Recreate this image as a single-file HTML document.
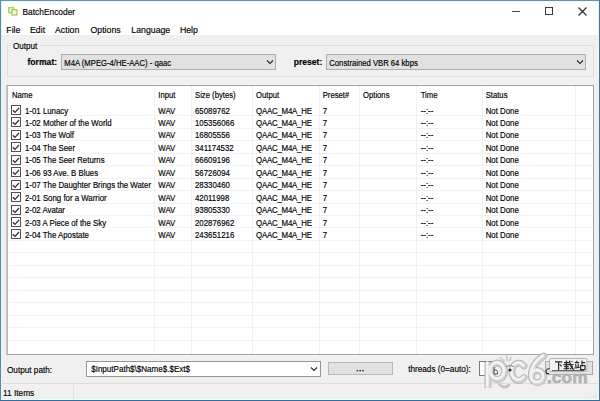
<!DOCTYPE html>
<html><head><meta charset="utf-8"><style>
html,body{margin:0;padding:0;width:600px;height:401px;overflow:hidden;background:#f0f0f0;}
.b{position:absolute;}
.t{position:absolute;white-space:pre;font-family:"Liberation Sans",sans-serif;-webkit-text-stroke:0.15px currentColor;}
</style></head><body>
<div class="b" style="left:0px;top:0px;width:600px;height:401px;background:#f0f0f0;"></div>
<div class="b" style="left:0px;top:0px;width:600px;height:35px;background:#ffffff;"></div>
<svg class="b" style="left:4px;top:3px" width="18" height="16" viewBox="0 0 18 16"><rect x="4.7" y="4.7" width="4.8" height="4.9" fill="#f4fbe6" stroke="#a8d25e" stroke-width="1.4"/><rect x="7.9" y="6.7" width="5" height="5.3" fill="#f4fbe6" stroke="#a8d25e" stroke-width="1.4"/></svg>
<div class="t" style="left:22.5px;top:6.75px;font-size:8.4px;line-height:10.08px;color:#000;transform:scaleY(1.12);transform-origin:0 7.95px;">BatchEncoder</div>
<div class="b" style="left:512px;top:11px;width:8px;height:1px;background:#444;"></div>
<div class="b" style="left:545px;top:7px;width:8px;height:8px;border:1.2px solid #3a3a3a;box-sizing:border-box;"></div>
<svg class="b" style="left:578px;top:7px" width="9" height="9" viewBox="0 0 9 9"><path d="M0.5 0.5L8.5 8.5M8.5 0.5L0.5 8.5" stroke="#333" stroke-width="1.3"/></svg>
<div class="t" style="left:6.3px;top:24.72px;font-size:8.75px;line-height:10.5px;color:#000;transform:scaleY(1.12);transform-origin:0 8.28px;">File</div>
<div class="t" style="left:30px;top:24.72px;font-size:8.75px;line-height:10.5px;color:#000;transform:scaleY(1.12);transform-origin:0 8.28px;">Edit</div>
<div class="t" style="left:55px;top:24.72px;font-size:8.75px;line-height:10.5px;color:#000;transform:scaleY(1.12);transform-origin:0 8.28px;">Action</div>
<div class="t" style="left:90.5px;top:24.72px;font-size:8.75px;line-height:10.5px;color:#000;transform:scaleY(1.12);transform-origin:0 8.28px;">Options</div>
<div class="t" style="left:131.3px;top:24.72px;font-size:8.75px;line-height:10.5px;color:#000;transform:scaleY(1.12);transform-origin:0 8.28px;">Language</div>
<div class="t" style="left:179.9px;top:24.72px;font-size:8.75px;line-height:10.5px;color:#000;transform:scaleY(1.12);transform-origin:0 8.28px;">Help</div>
<div class="b" style="left:7px;top:45px;width:587px;height:32px;border:1px solid #e0e0e0;box-sizing:border-box;"></div>
<div class="b" style="left:11px;top:42px;width:29px;height:9px;background:#f0f0f0;"></div>
<div class="t" style="left:13px;top:41.53px;font-size:8.1px;line-height:9.72px;color:#000;transform:scaleY(1.12);transform-origin:0 7.67px;">Output</div>
<div class="t" style="left:27.5px;top:57.16px;font-size:8.6px;line-height:10.32px;font-weight:bold;color:#000;transform:scaleY(1.12);transform-origin:0 8.14px;">format:</div>
<div class="b" style="left:61px;top:54px;width:215px;height:16px;background:#e1e1e1;border:1px solid #adadad;box-sizing:border-box;"></div>
<div class="t" style="left:64.3px;top:58.71px;font-size:7.7px;line-height:9.24px;color:#000;transform:scaleY(1.12);transform-origin:0 7.29px;">M4A (MPEG-4/HE-AAC) - qaac</div>
<svg class="b" style="left:266px;top:59px" width="8" height="6" viewBox="0 0 8 6"><path d="M1 1.5L4 4.5L7 1.5" fill="none" stroke="#2a2a2a" stroke-width="1.1"/></svg>
<div class="t" style="left:293.7px;top:57.16px;font-size:8.6px;line-height:10.32px;font-weight:bold;color:#000;transform:scaleY(1.12);transform-origin:0 8.14px;">preset:</div>
<div class="b" style="left:326px;top:54px;width:260px;height:16px;background:#e1e1e1;border:1px solid #adadad;box-sizing:border-box;"></div>
<div class="t" style="left:329.3px;top:58.71px;font-size:7.7px;line-height:9.24px;color:#000;transform:scaleY(1.12);transform-origin:0 7.29px;">Constrained VBR 64 kbps</div>
<svg class="b" style="left:576px;top:59px" width="8" height="6" viewBox="0 0 8 6"><path d="M1 1.5L4 4.5L7 1.5" fill="none" stroke="#2a2a2a" stroke-width="1.1"/></svg>
<div class="b" style="left:6px;top:85px;width:588px;height:270px;background:#fff;border:1px solid #a6a6aa;border-left:0;box-sizing:border-box;"></div>
<div class="b" style="left:6px;top:85px;width:1px;height:270px;background:#c4c4c8;"></div>
<div class="b" style="left:7px;top:86px;width:1px;height:268px;background:#bcbcc0;"></div>
<div class="b" style="left:154px;top:86px;width:1px;height:268px;background:#f0f0f0;"></div>
<div class="b" style="left:191px;top:86px;width:1px;height:268px;background:#f0f0f0;"></div>
<div class="b" style="left:252px;top:86px;width:1px;height:268px;background:#f0f0f0;"></div>
<div class="b" style="left:319px;top:86px;width:1px;height:268px;background:#f0f0f0;"></div>
<div class="b" style="left:359px;top:86px;width:1px;height:268px;background:#f0f0f0;"></div>
<div class="b" style="left:416px;top:86px;width:1px;height:268px;background:#f0f0f0;"></div>
<div class="b" style="left:482px;top:86px;width:1px;height:268px;background:#f0f0f0;"></div>
<div class="b" style="left:575px;top:86px;width:1px;height:268px;background:#f0f0f0;"></div>
<div class="b" style="left:8px;top:115.4px;width:585px;height:1px;background:#f2f2f2;"></div>
<div class="b" style="left:8px;top:127.85000000000001px;width:585px;height:1px;background:#f2f2f2;"></div>
<div class="b" style="left:8px;top:140.3px;width:585px;height:1px;background:#f2f2f2;"></div>
<div class="b" style="left:8px;top:152.75px;width:585px;height:1px;background:#f2f2f2;"></div>
<div class="b" style="left:8px;top:165.2px;width:585px;height:1px;background:#f2f2f2;"></div>
<div class="b" style="left:8px;top:177.65px;width:585px;height:1px;background:#f2f2f2;"></div>
<div class="b" style="left:8px;top:190.1px;width:585px;height:1px;background:#f2f2f2;"></div>
<div class="b" style="left:8px;top:202.55px;width:585px;height:1px;background:#f2f2f2;"></div>
<div class="b" style="left:8px;top:215.0px;width:585px;height:1px;background:#f2f2f2;"></div>
<div class="b" style="left:8px;top:227.45px;width:585px;height:1px;background:#f2f2f2;"></div>
<div class="b" style="left:8px;top:239.9px;width:585px;height:1px;background:#f2f2f2;"></div>
<div class="b" style="left:8px;top:252.35px;width:585px;height:1px;background:#f2f2f2;"></div>
<div class="b" style="left:8px;top:264.79999999999995px;width:585px;height:1px;background:#f2f2f2;"></div>
<div class="b" style="left:8px;top:277.25px;width:585px;height:1px;background:#f2f2f2;"></div>
<div class="b" style="left:8px;top:289.7px;width:585px;height:1px;background:#f2f2f2;"></div>
<div class="b" style="left:8px;top:302.15px;width:585px;height:1px;background:#f2f2f2;"></div>
<div class="b" style="left:8px;top:314.6px;width:585px;height:1px;background:#f2f2f2;"></div>
<div class="b" style="left:8px;top:327.04999999999995px;width:585px;height:1px;background:#f2f2f2;"></div>
<div class="b" style="left:8px;top:339.5px;width:585px;height:1px;background:#f2f2f2;"></div>
<div class="t" style="left:12px;top:90.71px;font-size:7.7px;line-height:9.24px;color:#000;transform:scaleY(1.12);transform-origin:0 7.29px;">Name</div>
<div class="t" style="left:158.3px;top:90.71px;font-size:7.7px;line-height:9.24px;color:#000;transform:scaleY(1.12);transform-origin:0 7.29px;">Input</div>
<div class="t" style="left:195px;top:90.71px;font-size:7.7px;line-height:9.24px;color:#000;transform:scaleY(1.12);transform-origin:0 7.29px;">Size (bytes)</div>
<div class="t" style="left:256px;top:90.71px;font-size:7.7px;line-height:9.24px;color:#000;transform:scaleY(1.12);transform-origin:0 7.29px;">Output</div>
<div class="t" style="left:322.7px;top:90.71px;font-size:7.7px;line-height:9.24px;color:#000;transform:scaleY(1.12);transform-origin:0 7.29px;">Preset#</div>
<div class="t" style="left:363px;top:90.71px;font-size:7.7px;line-height:9.24px;color:#000;transform:scaleY(1.12);transform-origin:0 7.29px;">Options</div>
<div class="t" style="left:420.7px;top:90.71px;font-size:7.7px;line-height:9.24px;color:#000;transform:scaleY(1.12);transform-origin:0 7.29px;">Time</div>
<div class="t" style="left:485.7px;top:90.71px;font-size:7.7px;line-height:9.24px;color:#000;transform:scaleY(1.12);transform-origin:0 7.29px;">Status</div>
<svg class="b" style="left:11px;top:104.90px" width="10" height="10" viewBox="0 0 10 10"><rect x="0.5" y="0.5" width="9" height="9" fill="#fff" stroke="#505050" stroke-width="1"/><path d="M1.8 5.2L4 7.3L8 3" fill="none" stroke="#2e2e2e" stroke-width="1.2"/></svg>
<div class="t" style="left:25px;top:106.57px;font-size:7.85px;line-height:9.42px;color:#000;transform:scaleY(1.12);transform-origin:0 7.43px;">1-01 Lunacy</div>
<div class="t" style="left:158.3px;top:106.57px;font-size:7.85px;line-height:9.42px;color:#000;transform:scaleY(1.12);transform-origin:0 7.43px;">WAV</div>
<div class="t" style="left:195px;top:106.57px;font-size:7.85px;line-height:9.42px;color:#000;transform:scaleY(1.12);transform-origin:0 7.43px;">65089762</div>
<div class="t" style="left:256px;top:106.57px;font-size:7.85px;line-height:9.42px;color:#000;transform:scaleY(1.12);transform-origin:0 7.43px;letter-spacing:-0.2px;">QAAC_M4A_HE</div>
<div class="t" style="left:322.7px;top:106.57px;font-size:7.85px;line-height:9.42px;color:#000;transform:scaleY(1.12);transform-origin:0 7.43px;">7</div>
<div class="t" style="left:420.7px;top:106.57px;font-size:7.85px;line-height:9.42px;color:#000;transform:scaleY(1.12);transform-origin:0 7.43px;">--:--</div>
<div class="t" style="left:485.7px;top:106.57px;font-size:7.85px;line-height:9.42px;color:#000;transform:scaleY(1.12);transform-origin:0 7.43px;">Not Done</div>
<svg class="b" style="left:11px;top:117.35px" width="10" height="10" viewBox="0 0 10 10"><rect x="0.5" y="0.5" width="9" height="9" fill="#fff" stroke="#505050" stroke-width="1"/><path d="M1.8 5.2L4 7.3L8 3" fill="none" stroke="#2e2e2e" stroke-width="1.2"/></svg>
<div class="t" style="left:25px;top:119.02px;font-size:7.85px;line-height:9.42px;color:#000;transform:scaleY(1.12);transform-origin:0 7.43px;">1-02 Mother of the World</div>
<div class="t" style="left:158.3px;top:119.02px;font-size:7.85px;line-height:9.42px;color:#000;transform:scaleY(1.12);transform-origin:0 7.43px;">WAV</div>
<div class="t" style="left:195px;top:119.02px;font-size:7.85px;line-height:9.42px;color:#000;transform:scaleY(1.12);transform-origin:0 7.43px;">105356066</div>
<div class="t" style="left:256px;top:119.02px;font-size:7.85px;line-height:9.42px;color:#000;transform:scaleY(1.12);transform-origin:0 7.43px;letter-spacing:-0.2px;">QAAC_M4A_HE</div>
<div class="t" style="left:322.7px;top:119.02px;font-size:7.85px;line-height:9.42px;color:#000;transform:scaleY(1.12);transform-origin:0 7.43px;">7</div>
<div class="t" style="left:420.7px;top:119.02px;font-size:7.85px;line-height:9.42px;color:#000;transform:scaleY(1.12);transform-origin:0 7.43px;">--:--</div>
<div class="t" style="left:485.7px;top:119.02px;font-size:7.85px;line-height:9.42px;color:#000;transform:scaleY(1.12);transform-origin:0 7.43px;">Not Done</div>
<svg class="b" style="left:11px;top:129.80px" width="10" height="10" viewBox="0 0 10 10"><rect x="0.5" y="0.5" width="9" height="9" fill="#fff" stroke="#505050" stroke-width="1"/><path d="M1.8 5.2L4 7.3L8 3" fill="none" stroke="#2e2e2e" stroke-width="1.2"/></svg>
<div class="t" style="left:25px;top:131.47px;font-size:7.85px;line-height:9.42px;color:#000;transform:scaleY(1.12);transform-origin:0 7.43px;">1-03 The Wolf</div>
<div class="t" style="left:158.3px;top:131.47px;font-size:7.85px;line-height:9.42px;color:#000;transform:scaleY(1.12);transform-origin:0 7.43px;">WAV</div>
<div class="t" style="left:195px;top:131.47px;font-size:7.85px;line-height:9.42px;color:#000;transform:scaleY(1.12);transform-origin:0 7.43px;">16805556</div>
<div class="t" style="left:256px;top:131.47px;font-size:7.85px;line-height:9.42px;color:#000;transform:scaleY(1.12);transform-origin:0 7.43px;letter-spacing:-0.2px;">QAAC_M4A_HE</div>
<div class="t" style="left:322.7px;top:131.47px;font-size:7.85px;line-height:9.42px;color:#000;transform:scaleY(1.12);transform-origin:0 7.43px;">7</div>
<div class="t" style="left:420.7px;top:131.47px;font-size:7.85px;line-height:9.42px;color:#000;transform:scaleY(1.12);transform-origin:0 7.43px;">--:--</div>
<div class="t" style="left:485.7px;top:131.47px;font-size:7.85px;line-height:9.42px;color:#000;transform:scaleY(1.12);transform-origin:0 7.43px;">Not Done</div>
<svg class="b" style="left:11px;top:142.25px" width="10" height="10" viewBox="0 0 10 10"><rect x="0.5" y="0.5" width="9" height="9" fill="#fff" stroke="#505050" stroke-width="1"/><path d="M1.8 5.2L4 7.3L8 3" fill="none" stroke="#2e2e2e" stroke-width="1.2"/></svg>
<div class="t" style="left:25px;top:143.92px;font-size:7.85px;line-height:9.42px;color:#000;transform:scaleY(1.12);transform-origin:0 7.43px;">1-04 The Seer</div>
<div class="t" style="left:158.3px;top:143.92px;font-size:7.85px;line-height:9.42px;color:#000;transform:scaleY(1.12);transform-origin:0 7.43px;">WAV</div>
<div class="t" style="left:195px;top:143.92px;font-size:7.85px;line-height:9.42px;color:#000;transform:scaleY(1.12);transform-origin:0 7.43px;">341174532</div>
<div class="t" style="left:256px;top:143.92px;font-size:7.85px;line-height:9.42px;color:#000;transform:scaleY(1.12);transform-origin:0 7.43px;letter-spacing:-0.2px;">QAAC_M4A_HE</div>
<div class="t" style="left:322.7px;top:143.92px;font-size:7.85px;line-height:9.42px;color:#000;transform:scaleY(1.12);transform-origin:0 7.43px;">7</div>
<div class="t" style="left:420.7px;top:143.92px;font-size:7.85px;line-height:9.42px;color:#000;transform:scaleY(1.12);transform-origin:0 7.43px;">--:--</div>
<div class="t" style="left:485.7px;top:143.92px;font-size:7.85px;line-height:9.42px;color:#000;transform:scaleY(1.12);transform-origin:0 7.43px;">Not Done</div>
<svg class="b" style="left:11px;top:154.70px" width="10" height="10" viewBox="0 0 10 10"><rect x="0.5" y="0.5" width="9" height="9" fill="#fff" stroke="#505050" stroke-width="1"/><path d="M1.8 5.2L4 7.3L8 3" fill="none" stroke="#2e2e2e" stroke-width="1.2"/></svg>
<div class="t" style="left:25px;top:156.37px;font-size:7.85px;line-height:9.42px;color:#000;transform:scaleY(1.12);transform-origin:0 7.43px;">1-05 The Seer Returns</div>
<div class="t" style="left:158.3px;top:156.37px;font-size:7.85px;line-height:9.42px;color:#000;transform:scaleY(1.12);transform-origin:0 7.43px;">WAV</div>
<div class="t" style="left:195px;top:156.37px;font-size:7.85px;line-height:9.42px;color:#000;transform:scaleY(1.12);transform-origin:0 7.43px;">66609196</div>
<div class="t" style="left:256px;top:156.37px;font-size:7.85px;line-height:9.42px;color:#000;transform:scaleY(1.12);transform-origin:0 7.43px;letter-spacing:-0.2px;">QAAC_M4A_HE</div>
<div class="t" style="left:322.7px;top:156.37px;font-size:7.85px;line-height:9.42px;color:#000;transform:scaleY(1.12);transform-origin:0 7.43px;">7</div>
<div class="t" style="left:420.7px;top:156.37px;font-size:7.85px;line-height:9.42px;color:#000;transform:scaleY(1.12);transform-origin:0 7.43px;">--:--</div>
<div class="t" style="left:485.7px;top:156.37px;font-size:7.85px;line-height:9.42px;color:#000;transform:scaleY(1.12);transform-origin:0 7.43px;">Not Done</div>
<svg class="b" style="left:11px;top:167.15px" width="10" height="10" viewBox="0 0 10 10"><rect x="0.5" y="0.5" width="9" height="9" fill="#fff" stroke="#505050" stroke-width="1"/><path d="M1.8 5.2L4 7.3L8 3" fill="none" stroke="#2e2e2e" stroke-width="1.2"/></svg>
<div class="t" style="left:25px;top:168.82px;font-size:7.85px;line-height:9.42px;color:#000;transform:scaleY(1.12);transform-origin:0 7.43px;">1-06 93 Ave. B Blues</div>
<div class="t" style="left:158.3px;top:168.82px;font-size:7.85px;line-height:9.42px;color:#000;transform:scaleY(1.12);transform-origin:0 7.43px;">WAV</div>
<div class="t" style="left:195px;top:168.82px;font-size:7.85px;line-height:9.42px;color:#000;transform:scaleY(1.12);transform-origin:0 7.43px;">56726094</div>
<div class="t" style="left:256px;top:168.82px;font-size:7.85px;line-height:9.42px;color:#000;transform:scaleY(1.12);transform-origin:0 7.43px;letter-spacing:-0.2px;">QAAC_M4A_HE</div>
<div class="t" style="left:322.7px;top:168.82px;font-size:7.85px;line-height:9.42px;color:#000;transform:scaleY(1.12);transform-origin:0 7.43px;">7</div>
<div class="t" style="left:420.7px;top:168.82px;font-size:7.85px;line-height:9.42px;color:#000;transform:scaleY(1.12);transform-origin:0 7.43px;">--:--</div>
<div class="t" style="left:485.7px;top:168.82px;font-size:7.85px;line-height:9.42px;color:#000;transform:scaleY(1.12);transform-origin:0 7.43px;">Not Done</div>
<svg class="b" style="left:11px;top:179.60px" width="10" height="10" viewBox="0 0 10 10"><rect x="0.5" y="0.5" width="9" height="9" fill="#fff" stroke="#505050" stroke-width="1"/><path d="M1.8 5.2L4 7.3L8 3" fill="none" stroke="#2e2e2e" stroke-width="1.2"/></svg>
<div class="t" style="left:25px;top:181.27px;font-size:7.85px;line-height:9.42px;color:#000;transform:scaleY(1.12);transform-origin:0 7.43px;">1-07 The Daughter Brings the Water</div>
<div class="t" style="left:158.3px;top:181.27px;font-size:7.85px;line-height:9.42px;color:#000;transform:scaleY(1.12);transform-origin:0 7.43px;">WAV</div>
<div class="t" style="left:195px;top:181.27px;font-size:7.85px;line-height:9.42px;color:#000;transform:scaleY(1.12);transform-origin:0 7.43px;">28330460</div>
<div class="t" style="left:256px;top:181.27px;font-size:7.85px;line-height:9.42px;color:#000;transform:scaleY(1.12);transform-origin:0 7.43px;letter-spacing:-0.2px;">QAAC_M4A_HE</div>
<div class="t" style="left:322.7px;top:181.27px;font-size:7.85px;line-height:9.42px;color:#000;transform:scaleY(1.12);transform-origin:0 7.43px;">7</div>
<div class="t" style="left:420.7px;top:181.27px;font-size:7.85px;line-height:9.42px;color:#000;transform:scaleY(1.12);transform-origin:0 7.43px;">--:--</div>
<div class="t" style="left:485.7px;top:181.27px;font-size:7.85px;line-height:9.42px;color:#000;transform:scaleY(1.12);transform-origin:0 7.43px;">Not Done</div>
<svg class="b" style="left:11px;top:192.05px" width="10" height="10" viewBox="0 0 10 10"><rect x="0.5" y="0.5" width="9" height="9" fill="#fff" stroke="#505050" stroke-width="1"/><path d="M1.8 5.2L4 7.3L8 3" fill="none" stroke="#2e2e2e" stroke-width="1.2"/></svg>
<div class="t" style="left:25px;top:193.72px;font-size:7.85px;line-height:9.42px;color:#000;transform:scaleY(1.12);transform-origin:0 7.43px;">2-01 Song for a Warrior</div>
<div class="t" style="left:158.3px;top:193.72px;font-size:7.85px;line-height:9.42px;color:#000;transform:scaleY(1.12);transform-origin:0 7.43px;">WAV</div>
<div class="t" style="left:195px;top:193.72px;font-size:7.85px;line-height:9.42px;color:#000;transform:scaleY(1.12);transform-origin:0 7.43px;">42011998</div>
<div class="t" style="left:256px;top:193.72px;font-size:7.85px;line-height:9.42px;color:#000;transform:scaleY(1.12);transform-origin:0 7.43px;letter-spacing:-0.2px;">QAAC_M4A_HE</div>
<div class="t" style="left:322.7px;top:193.72px;font-size:7.85px;line-height:9.42px;color:#000;transform:scaleY(1.12);transform-origin:0 7.43px;">7</div>
<div class="t" style="left:420.7px;top:193.72px;font-size:7.85px;line-height:9.42px;color:#000;transform:scaleY(1.12);transform-origin:0 7.43px;">--:--</div>
<div class="t" style="left:485.7px;top:193.72px;font-size:7.85px;line-height:9.42px;color:#000;transform:scaleY(1.12);transform-origin:0 7.43px;">Not Done</div>
<svg class="b" style="left:11px;top:204.50px" width="10" height="10" viewBox="0 0 10 10"><rect x="0.5" y="0.5" width="9" height="9" fill="#fff" stroke="#505050" stroke-width="1"/><path d="M1.8 5.2L4 7.3L8 3" fill="none" stroke="#2e2e2e" stroke-width="1.2"/></svg>
<div class="t" style="left:25px;top:206.17px;font-size:7.85px;line-height:9.42px;color:#000;transform:scaleY(1.12);transform-origin:0 7.43px;">2-02 Avatar</div>
<div class="t" style="left:158.3px;top:206.17px;font-size:7.85px;line-height:9.42px;color:#000;transform:scaleY(1.12);transform-origin:0 7.43px;">WAV</div>
<div class="t" style="left:195px;top:206.17px;font-size:7.85px;line-height:9.42px;color:#000;transform:scaleY(1.12);transform-origin:0 7.43px;">93805330</div>
<div class="t" style="left:256px;top:206.17px;font-size:7.85px;line-height:9.42px;color:#000;transform:scaleY(1.12);transform-origin:0 7.43px;letter-spacing:-0.2px;">QAAC_M4A_HE</div>
<div class="t" style="left:322.7px;top:206.17px;font-size:7.85px;line-height:9.42px;color:#000;transform:scaleY(1.12);transform-origin:0 7.43px;">7</div>
<div class="t" style="left:420.7px;top:206.17px;font-size:7.85px;line-height:9.42px;color:#000;transform:scaleY(1.12);transform-origin:0 7.43px;">--:--</div>
<div class="t" style="left:485.7px;top:206.17px;font-size:7.85px;line-height:9.42px;color:#000;transform:scaleY(1.12);transform-origin:0 7.43px;">Not Done</div>
<svg class="b" style="left:11px;top:216.95px" width="10" height="10" viewBox="0 0 10 10"><rect x="0.5" y="0.5" width="9" height="9" fill="#fff" stroke="#505050" stroke-width="1"/><path d="M1.8 5.2L4 7.3L8 3" fill="none" stroke="#2e2e2e" stroke-width="1.2"/></svg>
<div class="t" style="left:25px;top:218.62px;font-size:7.85px;line-height:9.42px;color:#000;transform:scaleY(1.12);transform-origin:0 7.43px;">2-03 A Piece of the Sky</div>
<div class="t" style="left:158.3px;top:218.62px;font-size:7.85px;line-height:9.42px;color:#000;transform:scaleY(1.12);transform-origin:0 7.43px;">WAV</div>
<div class="t" style="left:195px;top:218.62px;font-size:7.85px;line-height:9.42px;color:#000;transform:scaleY(1.12);transform-origin:0 7.43px;">202876962</div>
<div class="t" style="left:256px;top:218.62px;font-size:7.85px;line-height:9.42px;color:#000;transform:scaleY(1.12);transform-origin:0 7.43px;letter-spacing:-0.2px;">QAAC_M4A_HE</div>
<div class="t" style="left:322.7px;top:218.62px;font-size:7.85px;line-height:9.42px;color:#000;transform:scaleY(1.12);transform-origin:0 7.43px;">7</div>
<div class="t" style="left:420.7px;top:218.62px;font-size:7.85px;line-height:9.42px;color:#000;transform:scaleY(1.12);transform-origin:0 7.43px;">--:--</div>
<div class="t" style="left:485.7px;top:218.62px;font-size:7.85px;line-height:9.42px;color:#000;transform:scaleY(1.12);transform-origin:0 7.43px;">Not Done</div>
<svg class="b" style="left:11px;top:229.40px" width="10" height="10" viewBox="0 0 10 10"><rect x="0.5" y="0.5" width="9" height="9" fill="#fff" stroke="#505050" stroke-width="1"/><path d="M1.8 5.2L4 7.3L8 3" fill="none" stroke="#2e2e2e" stroke-width="1.2"/></svg>
<div class="t" style="left:25px;top:231.07px;font-size:7.85px;line-height:9.42px;color:#000;transform:scaleY(1.12);transform-origin:0 7.43px;">2-04 The Apostate</div>
<div class="t" style="left:158.3px;top:231.07px;font-size:7.85px;line-height:9.42px;color:#000;transform:scaleY(1.12);transform-origin:0 7.43px;">WAV</div>
<div class="t" style="left:195px;top:231.07px;font-size:7.85px;line-height:9.42px;color:#000;transform:scaleY(1.12);transform-origin:0 7.43px;">243651216</div>
<div class="t" style="left:256px;top:231.07px;font-size:7.85px;line-height:9.42px;color:#000;transform:scaleY(1.12);transform-origin:0 7.43px;letter-spacing:-0.2px;">QAAC_M4A_HE</div>
<div class="t" style="left:322.7px;top:231.07px;font-size:7.85px;line-height:9.42px;color:#000;transform:scaleY(1.12);transform-origin:0 7.43px;">7</div>
<div class="t" style="left:420.7px;top:231.07px;font-size:7.85px;line-height:9.42px;color:#000;transform:scaleY(1.12);transform-origin:0 7.43px;">--:--</div>
<div class="t" style="left:485.7px;top:231.07px;font-size:7.85px;line-height:9.42px;color:#000;transform:scaleY(1.12);transform-origin:0 7.43px;">Not Done</div>
<div class="t" style="left:7px;top:365.64px;font-size:8.2px;line-height:9.84px;color:#000;transform:scaleY(1.12);transform-origin:0 7.76px;">Output path:</div>
<div class="b" style="left:86px;top:361px;width:235px;height:16px;background:#fff;border:1px solid #959595;box-sizing:border-box;"></div>
<div class="t" style="left:91.2px;top:365.38px;font-size:8.05px;line-height:9.66px;color:#000;transform:scaleY(1.12);transform-origin:0 7.62px;">$InputPath$\$Name$.$Ext$</div>
<svg class="b" style="left:310px;top:366px" width="8" height="6" viewBox="0 0 8 6"><path d="M1 1.5L4 4.5L7 1.5" fill="none" stroke="#2a2a2a" stroke-width="1.1"/></svg>
<div class="b" style="left:328px;top:362px;width:65px;height:13px;background:#e1e1e1;border:1px solid #b8b8b8;box-sizing:border-box;"></div>
<svg class="b" style="left:354px;top:367px" width="12" height="7" viewBox="0 0 12 7"><g fill="#3a3a3a"><circle cx="3.4" cy="3.6" r="0.95"/><circle cx="6.2" cy="3.6" r="0.95"/><circle cx="9" cy="3.6" r="0.95"/></g></svg>
<div class="t" style="left:408.2px;top:364.74px;font-size:8.2px;line-height:9.84px;color:#000;transform:scaleY(1.12);transform-origin:0 7.76px;">threads (0=auto):</div>
<div class="b" style="left:479px;top:361px;width:14px;height:14.5px;background:#fff;border:1px solid #7a7a7a;box-sizing:border-box;"></div>
<div class="b" style="left:545px;top:361px;width:48px;height:14px;background:#e1e1e1;border:1px solid #adadad;box-sizing:border-box;"></div>
<div class="b" style="left:1px;top:383px;width:598px;height:1px;background:#dcdcdc;"></div>
<div class="t" style="left:3px;top:389.14px;font-size:8.3px;line-height:9.96px;color:#000;transform:scaleY(1.12);transform-origin:0 7.86px;">11 Items</div>
<div class="b" style="left:73px;top:384px;width:1px;height:15px;background:#e0e0e0;"></div>
<svg class="b" style="left:588px;top:390px" width="10" height="10" viewBox="0 0 10 10"><g fill="#c4c4c4"><rect x="7.5" y="3.5" width="1" height="1"/><rect x="7.5" y="6" width="1" height="1"/><rect x="5" y="6" width="1" height="1"/><rect x="7.5" y="8.5" width="1" height="1"/><rect x="5" y="8.5" width="1" height="1"/><rect x="2.5" y="8.5" width="1" height="1"/></g></svg>
<svg class="b" style="left:0;top:0" width="600" height="401" viewBox="0 0 600 401"><g fill="none" stroke="#b4b4b4" stroke-width="6.8" stroke-linecap="round"><path d="M487.9 362 L487.9 388" stroke-linecap="butt"/><ellipse cx="497.6" cy="371.2" rx="7" ry="8.2"/><path d="M524 366 A7 8.6 0 1 0 524 377.5"/><path d="M543.8 356 C536.5 360.5 531.6 367 531.3 375.5"/><circle cx="537.5" cy="376.6" r="6.1"/></g><g fill="none" stroke="#d2d2d2" stroke-width="5.2" stroke-linecap="round"><path d="M487.9 362 L487.9 388" stroke-linecap="butt"/><ellipse cx="497.6" cy="371.2" rx="7" ry="8.2"/><path d="M524 366 A7 8.6 0 1 0 524 377.5"/><path d="M543.8 356 C536.5 360.5 531.6 367 531.3 375.5"/><circle cx="537.5" cy="376.6" r="6.1"/></g><g fill="none" stroke="#f4f4f4" stroke-width="2.6" stroke-linecap="round" transform="translate(-0.6,-0.6)"><path d="M487.9 362 L487.9 388" stroke-linecap="butt"/><ellipse cx="497.6" cy="371.2" rx="7" ry="8.2"/><path d="M524 366 A7 8.6 0 1 0 524 377.5"/><path d="M543.8 356 C536.5 360.5 531.6 367 531.3 375.5"/><circle cx="537.5" cy="376.6" r="6.1"/></g><g fill="none" stroke="#c2c2c2" stroke-width="1.4" stroke-linecap="round"><path d="M500 357.5 Q502.5 359 504 361"/><path d="M506.8 356 L507.2 360.5"/><path d="M511 357.5 L509.5 360.8"/></g><path d="M499.5 384.5 Q504 389.5 509 385" fill="none" stroke="#c0c0c0" stroke-width="2.4" stroke-linecap="round"/><rect x="549.5" y="358.5" width="37.5" height="13" rx="1.5" fill="#f2f2f2" stroke="#b4b4b4" stroke-width="1"/><path d="M552 370.5 L584 370.5" stroke="#555" stroke-width="0.9"/><g fill="none" stroke="#262626" stroke-width="1.15"><path d="M555 361.8 L562.2 361.8 M558.6 361.8 L558.6 370 M559.6 364.4 L561.6 366.4"/><path d="M564 362.6 L569 362.6 M566.5 360.6 L566.5 364.4 M563.4 364.6 L573.4 364.6 M569.4 360.6 Q570 366 573.6 370 M571.6 361 L572.4 362 M564.2 366.6 L568.6 366.6 M566.4 365.2 L566.4 370 M563.6 368.8 L569 368.4 M569.8 369.4 L572.8 366.2"/><path d="M576.6 360.8 L577 362 M574.6 362.6 L579.2 362.6 M575.6 364 L576 367 M578.4 364 L578 367 M574.2 368 L579.6 367.4 M582 360.6 L582 365.2 M582 362.6 L585.2 362.6 M580.6 365.6 L585 365.6 L585 369.6 L580.6 369.6 Z"/></g><text x="547" y="383" font-family="Liberation Sans" font-size="17.4" font-weight="bold" fill="#b6b6b6" stroke="#a8a8a8" stroke-width="0.5">.com</text><circle cx="510" cy="370" r="1.6" fill="#333"/><path d="M506 366.5 Q510 364.5 514 366.5" stroke="#666" stroke-width="0.8" fill="none"/><path d="M494 367 L494 374 L497.5 374 Q498.5 371 496 370 L494 370" stroke="#444" stroke-width="0.9" fill="none"/><path d="M549.5 368.5 Q546 369 546 371.5 Q546 374 549 373.5" stroke="#222" stroke-width="1.1" fill="none"/></svg>
<div class="b" style="left:1px;top:1px;width:598px;height:1px;background:#e8fdff;"></div>
<div class="b" style="left:1px;top:1px;width:1px;height:399px;background:#e2f8fc;"></div>
<div class="b" style="left:598px;top:1px;width:1px;height:399px;background:#e0f8ff;"></div>
<div class="b" style="left:1px;top:399px;width:598px;height:1px;background:#e8ffff;"></div>
<div class="b" style="left:0px;top:0px;width:600px;height:1px;background:#6a90a8;"></div>
<div class="b" style="left:0px;top:0px;width:1px;height:401px;background:#5a8a9c;"></div>
<div class="b" style="left:599px;top:0px;width:1px;height:401px;background:#4d7289;"></div>
<div class="b" style="left:0px;top:400px;width:600px;height:1px;background:#3070a0;"></div>
</body></html>
